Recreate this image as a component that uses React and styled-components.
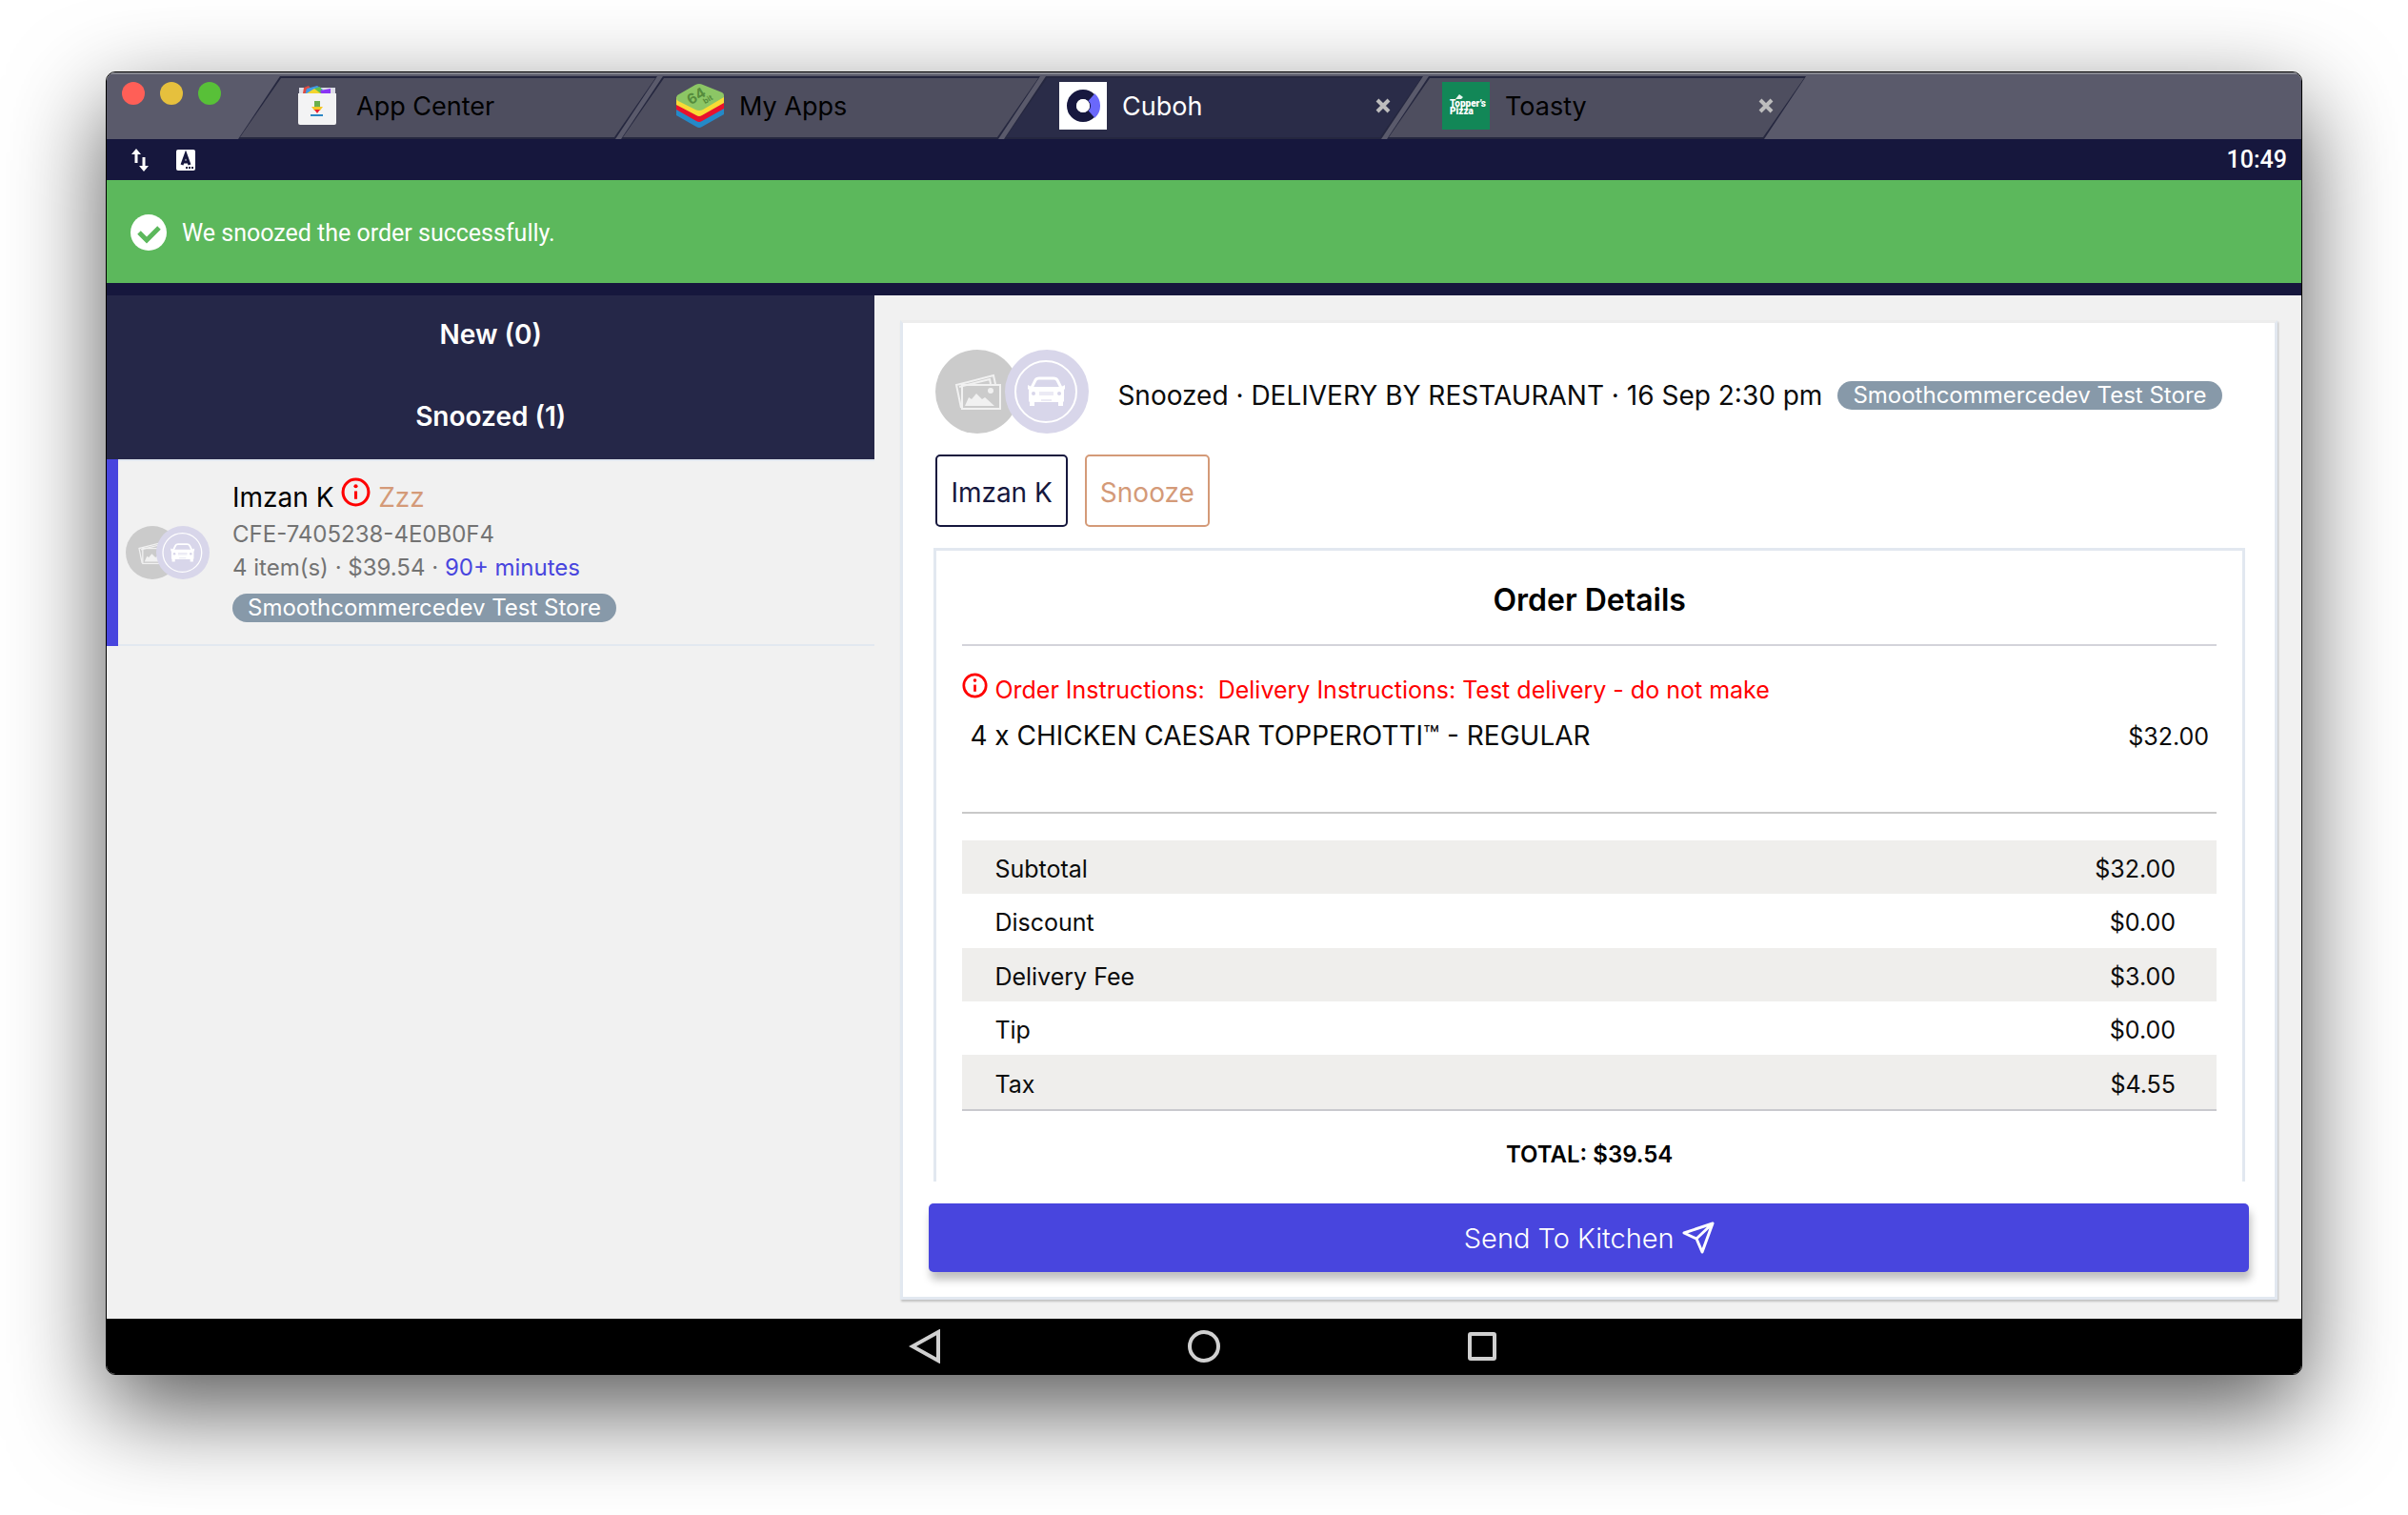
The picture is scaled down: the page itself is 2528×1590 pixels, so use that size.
import styled, { createGlobalStyle } from "styled-components";

const tabs = [
  { title: "App Center", icon: <AppCenterLogo /> },
  { title: "My Apps", icon: <StackLogo /> },
  { title: "Cuboh", icon: <CubohLogo />, active: true, closable: true },
  { title: "Toasty", icon: <PizzaLogo />, closable: true },
];

const charges = [
  { label: "Subtotal", amount: "$32.00" },
  { label: "Discount", amount: "$0.00" },
  { label: "Delivery Fee", amount: "$3.00" },
  { label: "Tip", amount: "$0.00" },
  { label: "Tax", amount: "$4.55" },
];

function App() {
  return (
    <>
      <GlobalStyle />
      <Page>
        <Window>
          <TitleBar>
            <Lights>
              <Light color="#ff5f57" aria-label="Close" />
              <Light color="#e6c03d" aria-label="Minimize" />
              <Light color="#58c038" aria-label="Zoom" />
            </Lights>
            <TabList>
              {tabs.map((tab) => (
                <Tab key={tab.title} $active={tab.active}>
                  <TabButton $active={tab.active}>
                    <TabIcon>{tab.icon}</TabIcon>
                    {tab.title}
                  </TabButton>
                  {tab.closable && (
                    <CloseButton aria-label={`Close ${tab.title}`}>
                      <CloseIcon />
                    </CloseButton>
                  )}
                </Tab>
              ))}
            </TabList>
          </TitleBar>

          <StatusBar>
            <StatusIcons>
              <TransferIcon />
              <KeyboardIcon />
            </StatusIcons>
            <time>10:49</time>
          </StatusBar>

          <Toast role="status">
            <CheckIcon />
            We snoozed the order successfully.
          </Toast>

          <Content>
            <Sidebar>
              <GroupButton>New (0)</GroupButton>
              <GroupButton>Snoozed (1)</GroupButton>
              <OrderItem>
                <Avatars size={56} />
                <OrderInfo>
                  <OrderName>
                    Imzan K <InfoIcon size={31} /> <Zzz>Zzz</Zzz>
                  </OrderName>
                  <OrderLine>CFE-7405238-4E0B0F4</OrderLine>
                  <OrderLine>
                    4 item(s) · $39.54 · <Wait>90+ minutes</Wait>
                  </OrderLine>
                  <OrderStore>Smoothcommercedev Test Store</OrderStore>
                </OrderInfo>
              </OrderItem>
            </Sidebar>

            <Main>
              <Card>
                <CardHeader>
                  <Avatars size={88} />
                  <HeaderText>
                    <Summary>
                      Snoozed · DELIVERY BY RESTAURANT · 16 Sep 2:30 pm
                    </Summary>
                    <Pill>Smoothcommercedev Test Store</Pill>
                  </HeaderText>
                </CardHeader>
                <Actions>
                  <OutlineButton color="#16173d">Imzan K</OutlineButton>
                  <OutlineButton color="#d49a78">Snooze</OutlineButton>
                </Actions>

                <Details>
                  <DetailsTitle>Order Details</DetailsTitle>
                  <Instructions>
                    <InfoIcon size={27} /> Order Instructions:&nbsp; Delivery
                    Instructions: Test delivery - do not make
                  </Instructions>
                  <Item>
                    <ItemName>4 x CHICKEN CAESAR TOPPEROTTI™ - REGULAR</ItemName>
                    <span>$32.00</span>
                  </Item>
                  <Charges>
                    <tbody>
                      {charges.map(({ label, amount }) => (
                        <tr key={label}>
                          <th scope="row">{label}</th>
                          <td>{amount}</td>
                        </tr>
                      ))}
                    </tbody>
                  </Charges>
                  <Total>TOTAL: $39.54</Total>
                </Details>

                <SendButton>
                  Send To Kitchen <PlaneIcon />
                </SendButton>
              </Card>
            </Main>
          </Content>

          <NavBar>
            <NavButton aria-label="Back">
              <svg viewBox="0 0 36 36">
                <path d="M31 3v30L4 18z" />
              </svg>
            </NavButton>
            <NavButton aria-label="Home">
              <svg viewBox="0 0 36 36">
                <circle cx="18" cy="18" r="15" />
              </svg>
            </NavButton>
            <NavButton aria-label="Recent apps">
              <svg viewBox="0 0 36 36">
                <rect x="5" y="5" width="26" height="26" rx="1" />
              </svg>
            </NavButton>
          </NavBar>
        </Window>
      </Page>
    </>
  );
}

function Avatars({ size }) {
  return (
    <AvatarPair $size={size}>
      <svg viewBox="0 0 88 88">
        <circle cx="44" cy="44" r="44" fill="#cbcbcb" />
        <g fill="none" stroke="#f1f1f1" strokeWidth="2">
          <path d="M27 61l-5-24 39-10 2 9" />
          <path d="M25 39l32-8 1 5" />
          <rect x="28" y="37" width="40" height="25" />
        </g>
        <path d="M31 59l4-9 3 2 5-6 6 6 3-2 10 9z" fill="#f1f1f1" />
        <circle cx="58" cy="43" r="3" fill="#f1f1f1" />
      </svg>
      <svg viewBox="0 0 88 88">
        <circle cx="44" cy="44" r="44" fill="#d8d6ea" />
        <circle cx="43" cy="44" r="32" fill="none" stroke="#fff" strokeWidth="2" />
        <path
          d="M28 40l4-8q1-2 4-2h15q3 0 4 2l4 8"
          fill="none"
          stroke="#fff"
          strokeWidth="3"
        />
        <path
          d="M24 37l4 2h31l4-2v4l-1 1v12l-1 1v4h-5v-4H31v4h-5v-4l-1-1V42l-1-1z"
          fill="#fff"
        />
        <circle cx="30" cy="46" r="2" fill="#d8d6ea" />
        <circle cx="57" cy="46" r="2" fill="#d8d6ea" />
        <path d="M36 45h15M36 47h15M38 53h11" stroke="#d8d6ea" strokeWidth="1" />
      </svg>
    </AvatarPair>
  );
}

function InfoIcon({ size }) {
  return (
    <svg width={size} height={size} viewBox="0 0 30 30">
      <circle cx="15" cy="15" r="13" fill="none" stroke="#f00" strokeWidth="3" />
      <path d="M15 14v8" stroke="#f00" strokeWidth="3" />
      <circle cx="15" cy="9" r="2" fill="#f00" />
    </svg>
  );
}

function AppCenterLogo() {
  return (
    <svg width="50" height="50" viewBox="0 0 50 50">
      <path d="M6 6h38v8H6z" fill="#dcdce6" />
      <path d="M11 6l5-2 6 8H10z" fill="#e04a3f" />
      <path d="M14 7l11-3 6 4-4 6H12z" fill="#3f9be8" />
      <path d="M22 7l6-2 4 8h-9z" fill="#5fc04a" />
      <path d="M28 9l11-2v7H30z" fill="#8a35f5" />
      <path d="M14 12l8-5 8 6z" fill="#f3d52f" />
      <path d="M5 12h40v31q0 2-2 2H7q-2 0-2-2z" fill="#f3f3f4" />
      <path d="M22 20h6v6h-6z" fill="#6ab04c" />
      <path d="M19 26h12l-3 4h-6z" fill="#f5c727" />
      <path d="M22 29h6l-3 4z" fill="#e8202f" />
      <path d="M18 34h13v2H18z" fill="#2c86c4" />
    </svg>
  );
}

function StackLogo() {
  return (
    <svg width="50" height="50" viewBox="0 0 50 50">
      <path d="M0 27l24-12 26 12v7L27 47q-3 2-6 0L0 35z" fill="#2489c8" />
      <path d="M0 22l24-12 26 12v6L27 41q-3 2-6 0L0 29z" fill="#e8112d" />
      <path d="M0 16l24-12 26 12v6L27 35q-3 2-6 0L0 24z" fill="#f8dc35" />
      <path
        d="M1 14L20 3q4-2 8 0l20 8q2 1 2 3v2L28 29q-4 2-8 0L2 20q-2-1-2-3z"
        fill="#8cc665"
      />
      <g
        fill="#558b3c"
        fontFamily="Inter, sans-serif"
        fontWeight="700"
        textAnchor="middle"
      >
        <text x="21" y="20" fontSize="15" transform="rotate(-32 21 15)">
          64
        </text>
        <text x="33" y="21" fontSize="8" transform="rotate(-32 33 18)">
          bit
        </text>
      </g>
    </svg>
  );
}

function CubohLogo() {
  return (
    <svg width="50" height="50" viewBox="0 0 50 50">
      <path d="M0 0h50v50H0z" fill="#fff" />
      <circle cx="25" cy="25" r="12" fill="none" stroke="#17183f" strokeWidth="10" />
      <path
        d="M34 16a12 12 0 0 1 0 18"
        fill="none"
        stroke="#6a68fb"
        strokeWidth="10"
      />
      <circle cx="25" cy="25" r="7" fill="#fff" />
    </svg>
  );
}

function PizzaLogo() {
  return (
    <svg width="50" height="50" viewBox="0 0 50 50">
      <path d="M0 0h50v50H0z" fill="#128757" />
      <path d="M14 18l4-5 4 3-2 2z" fill="#e9f5ef" />
      <g fill="#fff" fontFamily="Roboto, sans-serif" fontWeight="900" fontSize="10">
        <text x="8" y="26">Topper’s</text>
        <text x="8" y="34">Pizza</text>
      </g>
    </svg>
  );
}

function CloseIcon() {
  return (
    <svg width="16" height="16" viewBox="0 0 16 16">
      <path d="M2 2l12 12M14 2L2 14" stroke="#bdbdbd" strokeWidth="4" />
    </svg>
  );
}

function TransferIcon() {
  return (
    <svg width="20" height="24" viewBox="0 0 20 24">
      <path d="M6 15V4M14 9v11" stroke="#fff" strokeWidth="3" />
      <path d="M1 6l5-6 5 6zM9 18l5 6 5-6z" fill="#fff" />
    </svg>
  );
}

function KeyboardIcon() {
  return (
    <svg width="20" height="22" viewBox="0 0 20 22">
      <rect width="20" height="22" rx="2" fill="#fff" />
      <path
        d="M6 16l4-11 4 11M7 13h6"
        fill="none"
        stroke="#16173d"
        strokeWidth="3"
      />
      <path d="M10 19h2M13 19h2M16 19h2" stroke="#16173d" strokeWidth="2" />
    </svg>
  );
}

function CheckIcon() {
  return (
    <svg width="38" height="38" viewBox="0 0 38 38">
      <circle cx="19" cy="19" r="19" fill="#fff" />
      <path
        d="M9 19l8 8 13-13"
        fill="none"
        stroke="#5cb85c"
        strokeWidth="5"
      />
    </svg>
  );
}

function PlaneIcon() {
  return (
    <svg width="34" height="34" viewBox="0 0 34 34">
      <path
        d="M32 2L2 12l13 6 6 14zM32 2L15 18"
        fill="none"
        stroke="#fff"
        strokeWidth="3"
        strokeLinejoin="round"
      />
    </svg>
  );
}

const GlobalStyle = createGlobalStyle`
  * {
    box-sizing: border-box;
  }

  body {
    margin: 0;
    background-color: #fff;
    font-family: Inter, sans-serif;
    color: #0b0b0b;
  }

  button {
    font-family: inherit;
    cursor: pointer;
  }
`;

const Page = styled.div`
  display: flex;
  min-height: 100vh;
  padding: 75px 111px 147px;
`;

const Window = styled.div`
  flex: 1;
  display: flex;
  flex-direction: column;
  border: 1px solid #000;
  border-radius: 10px;
  overflow: hidden;
  background-color: #f1f1f1;
  box-shadow: 0 36px 100px rgba(0, 0, 0, 0.66);
`;

const TitleBar = styled.header`
  display: flex;
  align-items: flex-start;
  gap: 18px;
  height: 70px;
  padding: 2px 16px 0;
  background-color: #5a5a6b;
  border-top: 2px solid #85868f;
`;

const Lights = styled.div`
  display: flex;
  gap: 16px;
  padding-top: 6px;
`;

const Light = styled.button`
  width: 24px;
  height: 24px;
  padding: 0;
  border: none;
  border-radius: 50%;
  background-color: ${(props) => props.color};
`;

const TabList = styled.nav`
  display: flex;
  height: 66px;
`;

const Tab = styled.div`
  position: relative;
  isolation: isolate;
  display: flex;
  align-items: center;
  justify-content: space-between;
  width: 440px;
  height: 66px;
  padding: 0 34px 4px 58px;
  background-color: #25273f;
  clip-path: polygon(44px 0, 100% 0, calc(100% - 44px) 100%, 0 100%);

  & + & {
    margin-left: -38px;
  }

  &::before {
    content: "";
    position: absolute;
    z-index: -1;
    inset: 2px;
    background-color: ${(props) => (props.$active ? "#2a2c48" : "#4e4e5f")};
    clip-path: polygon(43px 0, 100% 0, calc(100% - 43px) 100%, 0 100%);
  }
`;

const TabButton = styled.button`
  display: flex;
  align-items: center;
  gap: 16px;
  padding: 0;
  border: none;
  background: none;
  font-size: 27px;
  color: ${(props) => (props.$active ? "#fff" : "#000")};
`;

const TabIcon = styled.span`
  display: flex;
`;

const CloseButton = styled.button`
  display: flex;
  padding: 0;
  border: none;
  background: none;
`;

const StatusBar = styled.div`
  display: flex;
  align-items: center;
  justify-content: space-between;
  height: 43px;
  padding: 0 15px 0 25px;
  background-color: #16173d;
  color: #fff;
  font-family: Roboto, sans-serif;
  font-size: 25px;
  font-weight: 500;
`;

const StatusIcons = styled.div`
  display: flex;
  align-items: center;
  gap: 28px;
`;

const Toast = styled.div`
  display: flex;
  align-items: center;
  gap: 16px;
  height: 108px;
  padding: 2px 25px 0;
  background-color: #5cb85c;
  color: #fff;
  font-family: Roboto, sans-serif;
  font-size: 25px;
`;

const Content = styled.div`
  flex: 1;
  display: flex;
  border-top: 13px solid #16173d;
`;

const Sidebar = styled.aside`
  width: 35%;
`;

const GroupButton = styled.button`
  display: block;
  width: 100%;
  height: 86px;
  padding: 0 0 4px;
  border: none;
  background-color: #252748;
  color: #fff;
  font-size: 28px;
  font-weight: 600;
`;

const OrderItem = styled.article`
  display: flex;
  align-items: center;
  gap: 24px;
  height: 196px;
  padding: 0 8px;
  border-left: 12px solid #4845de;
  box-shadow: inset 0 2px #e2e8f0, inset 0 -2px #e2e8f0;
`;

const OrderInfo = styled.div`
  display: flex;
  flex-direction: column;
  align-items: flex-start;
  padding-bottom: 6px;
`;

const OrderName = styled.div`
  font-size: 28px;
  line-height: 42px;
  color: #000;
`;

const Zzz = styled.span`
  color: #d49a78;
`;

const OrderLine = styled.div`
  font-size: 24px;
  line-height: 35px;
  color: #737373;
`;

const Wait = styled.span`
  color: #4845de;
`;

const Pill = styled.span`
  padding: 0 16px;
  border-radius: 15px;
  background-color: #8799a9;
  color: #fff;
  font-size: 24px;
  line-height: 30px;
  white-space: nowrap;
`;

const OrderStore = styled(Pill)`
  margin-top: 10px;
`;

const AvatarPair = styled.div`
  display: flex;
  flex-shrink: 0;

  svg {
    width: ${(props) => props.$size}px;
    height: ${(props) => props.$size}px;
  }

  svg + svg {
    margin-left: -${(props) => (props.$size > 60 ? 15 : 24)}px;
  }
`;

const Main = styled.main`
  flex: 1;
  display: flex;
  padding: 26px 25px 20px 27px;
`;

const Card = styled.section`
  flex: 1;
  display: flex;
  flex-direction: column;
  padding: 28px 27px 26px;
  border: 3px solid #e2e8f0;
  border-top-color: #ededed;
  background-color: #fff;
  box-shadow: 1px 2px 2px rgba(0, 0, 0, 0.2);
`;

const CardHeader = styled.div`
  display: flex;
  align-items: center;
  gap: 30px;
  padding-left: 7px;
`;

const HeaderText = styled.div`
  display: flex;
  align-items: center;
  gap: 16px;
  padding-top: 8px;
`;

const Summary = styled.h1`
  margin: 0;
  font-size: 28px;
  line-height: 40px;
  font-weight: 400;
`;

const Actions = styled.div`
  display: flex;
  gap: 18px;
  padding: 22px 7px;
`;

const OutlineButton = styled.button`
  height: 76px;
  padding: 4px 14px 0;
  border: 2px solid ${(props) => props.color};
  border-radius: 5px;
  background-color: #fff;
  color: ${(props) => props.color};
  font-size: 28px;
`;

const Details = styled.section`
  flex: 1;
  margin: 0 4px 0 5px;
  padding: 0 27px;
  border: 3px solid #e2e8f0;
  border-bottom: none;
`;

const DetailsTitle = styled.h2`
  margin: 0 0 26px;
  padding: 32px 0 26px;
  border-bottom: 2px solid #d3d3da;
  font-size: 32px;
  line-height: 40px;
  font-weight: 600;
  text-align: center;
  color: #000;
`;

const Instructions = styled.p`
  margin: 0;
  font-size: 25px;
  line-height: 40px;
  color: #f00;
`;

const Item = styled.div`
  display: flex;
  align-items: baseline;
  justify-content: space-between;
  height: 110px;
  padding: 8px 8px 0;
  border-bottom: 2px solid #c9c9c9;
  font-size: 25px;
  line-height: 40px;
`;

const ItemName = styled.span`
  font-size: 28px;
`;

const Charges = styled.table`
  width: 100%;
  height: 284px;
  margin-top: 28px;
  border-collapse: collapse;
  border-bottom: 2px solid #c9c9ce;
  font-size: 25px;

  tr:nth-child(odd) {
    background-color: #efeeec;
  }

  th {
    padding: 4px 34px 0;
    font-weight: 400;
    text-align: left;
  }

  td {
    padding: 4px 43px 0;
    text-align: right;
  }
`;

const Total = styled.p`
  margin: 26px 0 0;
  font-size: 24px;
  line-height: 40px;
  font-weight: 600;
  text-align: center;
  color: #000;
`;

const SendButton = styled.button`
  display: flex;
  align-items: center;
  justify-content: center;
  gap: 8px;
  height: 72px;
  margin-top: 23px;
  border: none;
  border-radius: 5px;
  background-color: #4845de;
  box-shadow: 2px 8px 8px rgba(0, 0, 0, 0.25);
  color: #fff;
  font-size: 29px;
  font-weight: 300;
`;

const NavBar = styled.nav`
  display: flex;
  align-items: center;
  justify-content: center;
  gap: 256px;
  height: 58px;
  background-color: #000;
`;

const NavButton = styled.button`
  display: flex;
  padding: 0;
  border: none;
  background: none;

  svg {
    width: 36px;
    height: 36px;
    fill: none;
    stroke: #d0d0d0;
    stroke-width: 4;
  }
`;

export default App;
